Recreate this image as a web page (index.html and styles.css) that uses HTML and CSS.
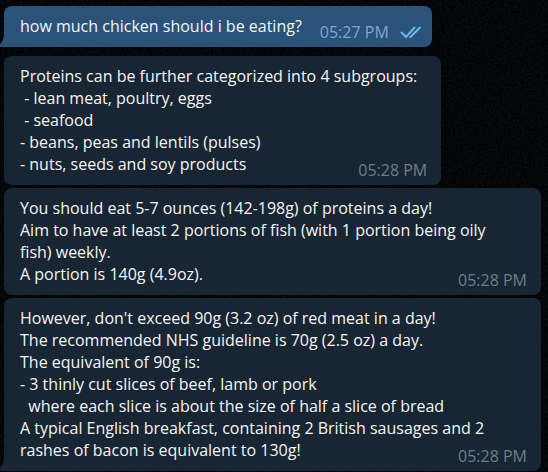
FILE: index.html
```
<!DOCTYPE html>
<html lang="en">
<head>
<meta charset="utf-8">
<meta name="viewport" content="width=device-width, initial-scale=1">
<title>Chat</title>
<link rel="stylesheet" href="styles.css">
</head>
<body>
<svg class="wallpaper" aria-hidden="true">
<filter id="grain" x="0" y="0" width="100%" height="100%" color-interpolation-filters="sRGB">
<feTurbulence type="fractalNoise" baseFrequency="0.45" numOctaves="2" seed="4"/>
<feColorMatrix values="0.05 0 0 0 -0.01  0.09 0 0 0 -0.02  0.09 0 0 0 -0.01  0 0 0 0 1"/>
</filter>
<rect width="100%" height="100%" filter="url(#grain)"/>
</svg>
<main class="chat">
<article class="bubble sent tailed">
<p>how much chicken should i be eating?</p>
<div class="meta"><time>05:27 PM</time><svg class="ticks" viewBox="0 0 22 14" role="img" aria-label="Read"><path d="M1 7L6 12L15 2M9.500 12H10.500L20.500 2"/></svg></div>
<svg class="tail" viewBox="0 0 8 14" aria-hidden="true"><path d="M8 0V14H0C5 12 8 7 8 0Z"/></svg>
</article>
<article class="bubble">
<p>Proteins can be further categorized into 4 subgroups:</p>
<p> - lean meat, poultry, eggs</p>
<p> - seafood</p>
<p>- beans, peas and lentils (pulses)</p>
<p>- nuts, seeds and soy products<time class="stamp">05:28 PM</time></p>
</article>
<article class="bubble">
<p>You should eat 5-7 ounces (142-198g) of proteins a day!</p>
<p>Aim to have at least 2 portions of fish (with 1 portion being oily fish) weekly.</p>
<p>A portion is 140g (4.9oz).<time class="stamp">05:28 PM</time></p>
</article>
<article class="bubble tailed">
<p>However, don't exceed 90g (3.2 oz) of red meat in a day!</p>
<p>The recommended NHS guideline is 70g (2.5 oz) a day.</p>
<p>The equivalent of 90g is:</p>
<p>- 3 thinly cut slices of beef, lamb or pork</p>
<p>  where each slice is about the size of half a slice of bread</p>
<p>A typical English breakfast, containing 2 British sausages and 2 rashes of bacon is equivalent to 130g!<time class="stamp">05:28 PM</time></p>
<svg class="tail" viewBox="0 0 8 14" aria-hidden="true"><path d="M8 0V14H0C5 12 8 7 8 0Z"/></svg>
</article>
</main>
</body>
</html>
```
FILE: styles.css
```
body {
  margin: 0;
  background: #06090c;
  color: #f5f5f5;
  font: 16px/22px "Open Sans", "Noto Sans", sans-serif;
}
.wallpaper {
  position: fixed;
  inset: 0;
  z-index: -1;
  width: 100%;
  height: 100%;
}
.chat {
  display: flex;
  flex-direction: column;
  align-items: flex-start;
  gap: 3px;
  padding: 6px 7px 0 4px;
}
.bubble {
  --fill: #182533;
  position: relative;
  box-sizing: border-box;
  max-width: 100%;
  padding: 9px 24px 10px 16px;
  border-radius: 8px;
  background: var(--fill);
}
.sent {
  --fill: #2b5278;
  display: flex;
  gap: 18px;
  margin-bottom: 6px;
  padding-right: 10px;
}
.tailed {
  border-bottom-left-radius: 0;
}
.tail {
  position: absolute;
  left: -8px;
  bottom: 0;
  width: 8px;
  height: 14px;
  fill: var(--fill);
}
.bubble p {
  margin: 0;
  white-space: pre-wrap;
}
.stamp {
  float: right;
  margin: 6px -10px -6px 16px;
  color: #6d7f8f;
}
.meta {
  display: flex;
  align-items: center;
  gap: 11px;
  margin: 6px 0 -6px;
  color: #7da8d3;
}
.ticks {
  width: 22px;
  height: 14px;
  fill: none;
  stroke: #6cb9f0;
  stroke-width: 2;
}
```
